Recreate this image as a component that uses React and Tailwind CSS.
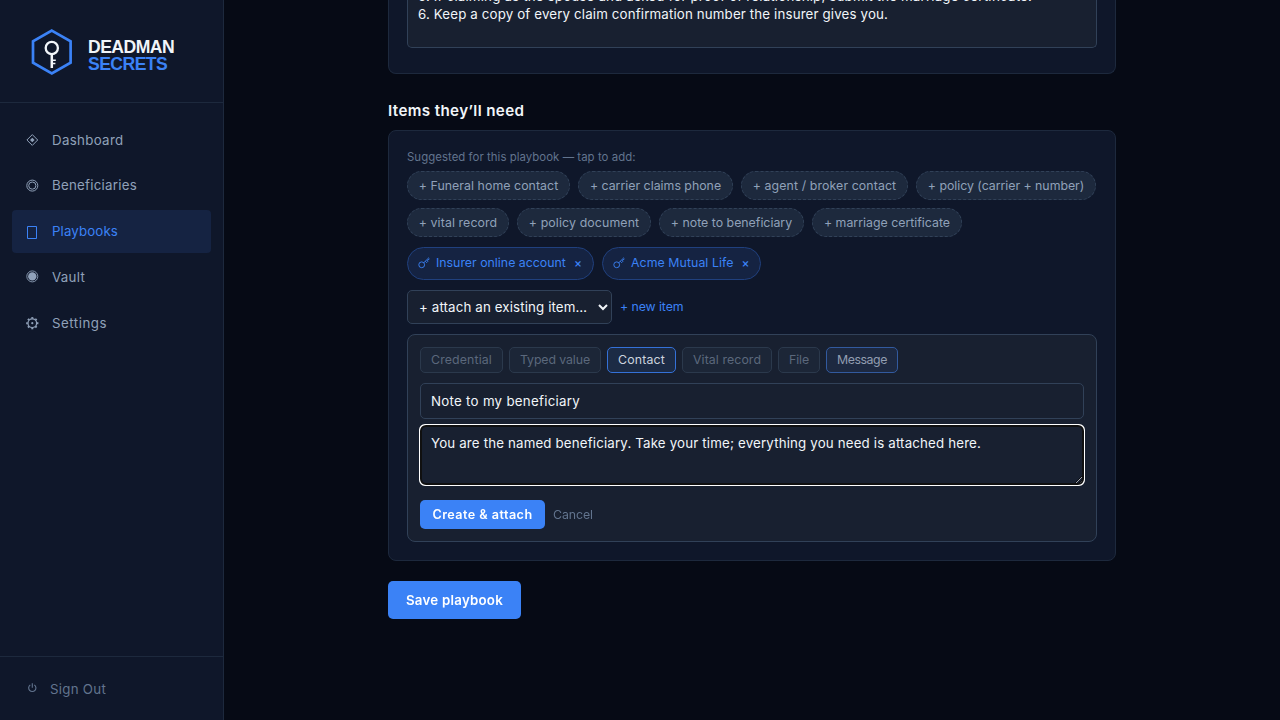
import React, { useState } from "react";
import clsx from "clsx";

const NAV = [
  { label: "Dashboard", icon: "diamond", tracking: "tracking-[0.32px]" },
  { label: "Beneficiaries", icon: "rings", tracking: "tracking-[0.26px]" },
  { label: "Playbooks", icon: "box", tracking: "tracking-[0.12px]" },
  { label: "Vault", icon: "disc", tracking: "tracking-[0.3px]" },
  { label: "Settings", icon: "gear", tracking: "tracking-[0.5px]" },
];

const SUGGESTED = [
  ["Funeral home contact", "w-[163px] tracking-[0.05px]"],
  ["carrier claims phone", "w-[155px]"],
  ["agent / broker contact", "w-[167px] tracking-[0.1px]"],
  ["policy (carrier + number)", "w-[180px] tracking-[-0.03px]"],
  ["vital record", "w-[102px] tracking-[0.1px]"],
  ["policy document", "w-[134px] tracking-[0.12px]"],
  ["note to beneficiary", "w-[145px]"],
  ["marriage certificate", "w-[150px]"],
];

const ATTACHED = [
  ["Insurer online account", "w-[187px]"],
  ["Acme Mutual Life", "w-[159px] tracking-[0.06px]"],
];

const KINDS = [
  ["Credential", "w-[83px] tracking-[0.13px]"],
  ["Typed value", "w-[92px] tracking-[-0.11px]"],
  ["Contact", "w-[69px] tracking-[0.17px]"],
  ["Vital record", "w-[90px] tracking-[0.08px]"],
  ["File", "w-[42px] tracking-[-0.1px]"],
  ["Message", "w-[72px] tracking-[-0.44px]"],
];

const kindStyle = (kind) => {
  if (kind === "Contact") return "bg-[#1c2b45] border-[#3471d8] text-[#ccd4df]";
  if (kind === "Message") return "bg-[#1d2941] border-[#325a9f] text-[#929eb1]";
  return "bg-[#1c2637] border-[#2b394c] text-[#5b687c]";
};

const GEAR_ANGLES = [0, 45, 90, 135, 180, 225, 270, 315];

function NavIcon({ name }) {
  return (
    <svg width="16" height="16" viewBox="0 0 16 16" fill="none" stroke="currentColor" className="shrink-0">
      {name === "diamond" && (
        <>
          <path d="M8.3 2.6 13.7 8l-5.4 5.4L2.9 8Z" />
          <path d="M8.3 5.7 10.6 8l-2.3 2.3L6 8Z" fill="currentColor" stroke="none" />
        </>
      )}
      {name === "rings" && (
        <>
          <circle cx="8.3" cy="7.6" r="5.5" />
          <circle cx="8.3" cy="7.6" r="3.6" />
        </>
      )}
      {name === "box" && <path d="M3.5 2.5h9v12h-9Z" />}
      {name === "disc" && (
        <>
          <circle cx="8.3" cy="7.4" r="5.5" strokeWidth="0.9" />
          <circle cx="8.3" cy="7.4" r="4.2" fill="currentColor" stroke="none" />
        </>
      )}
      {name === "gear" && (
        <>
          <circle cx="8.3" cy="8.2" r="4.3" strokeWidth="1.2" />
          <circle cx="8.3" cy="8.2" r="1.1" fill="currentColor" stroke="none" />
          {GEAR_ANGLES.map((a) => (
            <path key={a} d="M8.3 3.7V2.1" strokeWidth="2" transform={`rotate(${a} 8.3 8.2)`} />
          ))}
        </>
      )}
    </svg>
  );
}

function Logo() {
  return (
    <div className="h-[103px] shrink-0 border-b border-slate-800 flex items-center pl-7">
      <svg width="48" height="48" viewBox="0 0 48 48" fill="none" className="shrink-0 mt-0.5">
        <path d="M23.8 2.6 42.6 13.3v21.4L23.8 45.4 5 34.7V13.3Z" stroke="#3b82f6" strokeWidth="2.7" />
        <circle cx="23.8" cy="20" r="6.1" stroke="#f1f5f9" strokeWidth="2.3" />
        <path d="M23.8 26.5V40" stroke="#f1f5f9" strokeWidth="2.5" />
        <path d="M25 32.2h2.8M25 35.4h2.4" stroke="#f1f5f9" strokeWidth="1.5" />
      </svg>
      <div className="ml-3 mt-[9px] font-['Liberation_Sans',sans-serif] text-[17.6px] font-bold">
        <div className="h-[17px] leading-[17px] text-slate-100 tracking-[-0.55px]">DEADMAN</div>
        <div className="h-[17px] leading-[17px] text-[#3b82f6] tracking-[-0.55px]">SECRETS</div>
      </div>
    </div>
  );
}

function KeyIcon() {
  return (
    <svg width="12" height="12" viewBox="0 0 12 12" fill="none" stroke="currentColor" strokeWidth="0.9" className="shrink-0">
      <circle cx="3.7" cy="7.8" r="2.9" />
      <path d="M5.8 5.7 10.6 1l.9.9M7.3 4.3l1.3 1.3 1.2-1.2-.6-.8 1.8-1.4" />
    </svg>
  );
}

export default function App() {
  const [title, setTitle] = useState("Note to my beneficiary");
  const [body, setBody] = useState(
    "You are the named beneficiary. Take your time; everything you need is attached here."
  );

  return (
    <div className="flex h-screen overflow-hidden bg-[#060a15] font-['Inter',sans-serif] text-[13.3px] text-slate-100">
      {/* Sidebar */}
      <aside className="w-56 shrink-0 flex flex-col bg-[#0f172a] border-r border-slate-800">
        <Logo />
        <nav className="flex-1 flex flex-col gap-[2.75px] pt-[15.5px] px-3">
          {NAV.map(({ label, icon, tracking }) => (
            <a
              key={label}
              className={clsx(
                "flex items-center h-[43px] pl-3 rounded",
                label === "Playbooks" ? "bg-[#152342] text-[#3b82f6]" : "text-slate-400"
              )}
            >
              <NavIcon name={icon} />
              <span className={clsx("ml-3 pt-px", tracking)}>{label}</span>
            </a>
          ))}
        </nav>
        <div className="h-16 shrink-0 border-t border-slate-800 flex items-center pl-7 text-slate-500">
          <svg width="9" height="10" viewBox="0 0 9 10" fill="none" stroke="currentColor" strokeWidth="1.1" className="mr-[13px] -mt-0.5">
            <path d="M4.3 0.3v4.5M2.3 1.9a3.6 3.6 0 1 0 4 0" />
          </svg>
          <span className="pt-[3px] tracking-[0.27px]">Sign Out</span>
        </div>
      </aside>

      {/* Editor */}
      <main className="flex-1 flex justify-center">
        <div className="w-[728px] flex flex-col items-stretch">
          <section className="h-[74px] shrink-0 px-[18px] bg-[#0f172a] border border-t-0 border-slate-800 rounded-b-lg">
            <div className="h-12 overflow-hidden px-2.5 bg-[#182030] border border-t-0 border-slate-700 rounded-b-[5px] leading-[18px] whitespace-nowrap">
              <p className="-mt-[13px] tracking-[0.183px]">
                5. If claiming as the spouse and asked for proof of relationship, submit the marriage certificate.
              </p>
              <p className="tracking-[0.147px]">6. Keep a copy of every claim confirmation number the insurer gives you.</p>
            </div>
          </section>

          <h2 className="mt-[25px] mb-[7px] text-[15.2px] leading-6 font-semibold tracking-[0.37px]">Items they’ll need</h2>

          <section className="h-[431px] shrink-0 p-[18px] bg-[#0f172a] border border-slate-800 rounded-lg text-[12.35px]">
            <p className="mb-1.5 text-[11.4px] leading-4 text-slate-500 tracking-[0.05px]">
              Suggested for this playbook — tap to add:
            </p>
            <div className="flex flex-wrap gap-2">
              {SUGGESTED.map(([label, style]) => (
                <button
                  key={label}
                  className={clsx(
                    "h-[29px] pt-px flex items-center justify-center whitespace-nowrap rounded-full border border-dashed border-slate-700 bg-slate-800 text-slate-400",
                    style
                  )}
                >
                  + {label}
                </button>
              ))}
            </div>

            <div className="mt-2.5 flex gap-2">
              {ATTACHED.map(([label, style]) => (
                <span
                  key={label}
                  className={clsx(
                    "h-[33px] flex items-center pl-2.5 pb-px whitespace-nowrap rounded-full border border-[#20407e] bg-[#152342] text-[#3b82f6]",
                    style
                  )}
                >
                  <KeyIcon />
                  <span className="ml-1.5 mr-2">{label}</span>
                  <button className="text-xs leading-none font-medium">×</button>
                </span>
              ))}
            </div>

            <div className="mt-2.5 flex items-center gap-2">
              <select className="w-[205px] h-[34px] px-[7px] rounded-[5px] border border-slate-700 bg-[#182030] text-[13.3px] tracking-[0.13px]">
                <option>+ attach an existing item…</option>
              </select>
              <button className="text-[#3b82f6] tracking-[-0.09px]">+ new item</button>
            </div>

            {/* New item form */}
            <div className="mt-2.5 h-[208px] p-3 rounded-lg border border-slate-700 bg-[#182030]">
              <div className="flex gap-1.5">
                {KINDS.map(([kind, style]) => (
                  <button
                    key={kind}
                    className={clsx("h-[26px] flex items-center justify-center whitespace-nowrap rounded-[5px] border", kindStyle(kind), style)}
                  >
                    {kind}
                  </button>
                ))}
              </div>
              <input
                value={title}
                onChange={(e) => setTitle(e.target.value)}
                className="block mt-2.5 w-full h-9 px-2.5 rounded-[5px] border border-slate-700 text-[13.3px] tracking-[0.28px]"
              />
              <textarea
                autoFocus
                value={body}
                onChange={(e) => setBody(e.target.value)}
                className="block mt-1.5 w-full h-[60px] px-2.5 py-2 rounded-[5px] border border-slate-700 text-[13.3px] leading-[18px] tracking-[0.163px] caret-transparent"
              />
              <div className="mt-[15px] flex items-center gap-2">
                <button className="w-[125px] h-[29px] pt-px rounded-[5px] bg-[#3b82f6] text-white font-semibold text-[12.6px] tracking-[0.45px]">
                  Create & attach
                </button>
                <button className="pt-px text-slate-500 tracking-[-0.08px]">Cancel</button>
              </div>
            </div>
          </section>

          <button className="mt-5 w-[133px] h-[38px] pt-px shrink-0 rounded-[5px] bg-[#3b82f6] text-white font-semibold tracking-[0.24px]">
            Save playbook
          </button>
        </div>
      </main>
    </div>
  );
}
